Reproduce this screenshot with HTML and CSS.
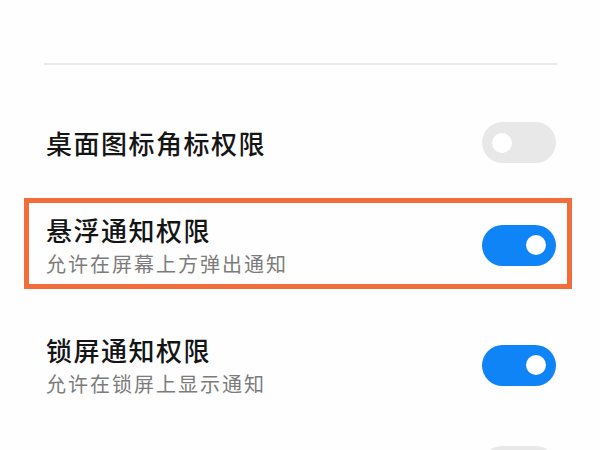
FILE: index.html
```html
<!DOCTYPE html>
<html lang="zh-CN">
<head>
<meta charset="utf-8">
<title>通知权限</title>
<link rel="stylesheet" href="styles.css">
</head>
<body>
<div class="screen">
  <div class="divider"></div>

  <div class="row row-first">
    <div class="text">
      <div class="title">桌面图标角标权限</div>
    </div>
    <div class="switch"><span class="knob"></span></div>
  </div>

  <div class="row row-highlight">
    <div class="text">
      <div class="title">悬浮通知权限</div>
      <div class="subtitle">允许在屏幕上方弹出通知</div>
    </div>
    <div class="switch on"><span class="knob"></span></div>
  </div>

  <div class="row row-third">
    <div class="text">
      <div class="title">锁屏通知权限</div>
      <div class="subtitle">允许在锁屏上显示通知</div>
    </div>
    <div class="switch on"><span class="knob"></span></div>
  </div>

  <div class="row row-fourth">
    <div class="text"></div>
    <div class="switch"><span class="knob"></span></div>
  </div>
</div>
</body>
</html>
```
FILE: styles.css
```css
html, body {
  margin: 0;
  padding: 0;
  background: #fefefe;
}

.screen {
  width: 600px;
  height: 450px;
  overflow: hidden;
  font-family: "Noto Sans CJK SC", "Noto Sans", sans-serif;
  display: flex;
  flex-direction: column;
}

.divider {
  margin: 63px 43px 0 44px;
  height: 2px;
  background: #e9e9e9;
  flex: none;
}

.row {
  display: flex;
  align-items: center;
  justify-content: space-between;
  flex: none;
}

.row-first {
  padding: 57px 44px 35px 46px;
}

.row-highlight {
  margin: 0 28px 0 24px;
  border: 5px solid #f26c3c;
  padding: 11px 11px 8px 17px;
}

.row-third {
  padding: 45px 44px 0 46px;
}

.row-fourth {
  padding: 50px 44px 0 46px;
}

.text {
  display: flex;
  flex-direction: column;
}

.title {
  font-size: 26px;
  line-height: 32px;
  letter-spacing: 1.5px;
  font-weight: 500;
  color: #151515;
}

.subtitle {
  margin-top: 6px;
  font-size: 20px;
  line-height: 24px;
  letter-spacing: 2px;
  color: #7c7c7c;
}

.switch {
  width: 74px;
  height: 41px;
  border-radius: 21px;
  background: #e8e8e8;
  display: flex;
  align-items: center;
  justify-content: flex-start;
  padding: 0 10px;
  box-sizing: border-box;
  flex: none;
}

.switch.on {
  background: #0f84f6;
  justify-content: flex-end;
}

.knob {
  width: 20px;
  height: 20px;
  border-radius: 50%;
  background: #ffffff;
}
```
